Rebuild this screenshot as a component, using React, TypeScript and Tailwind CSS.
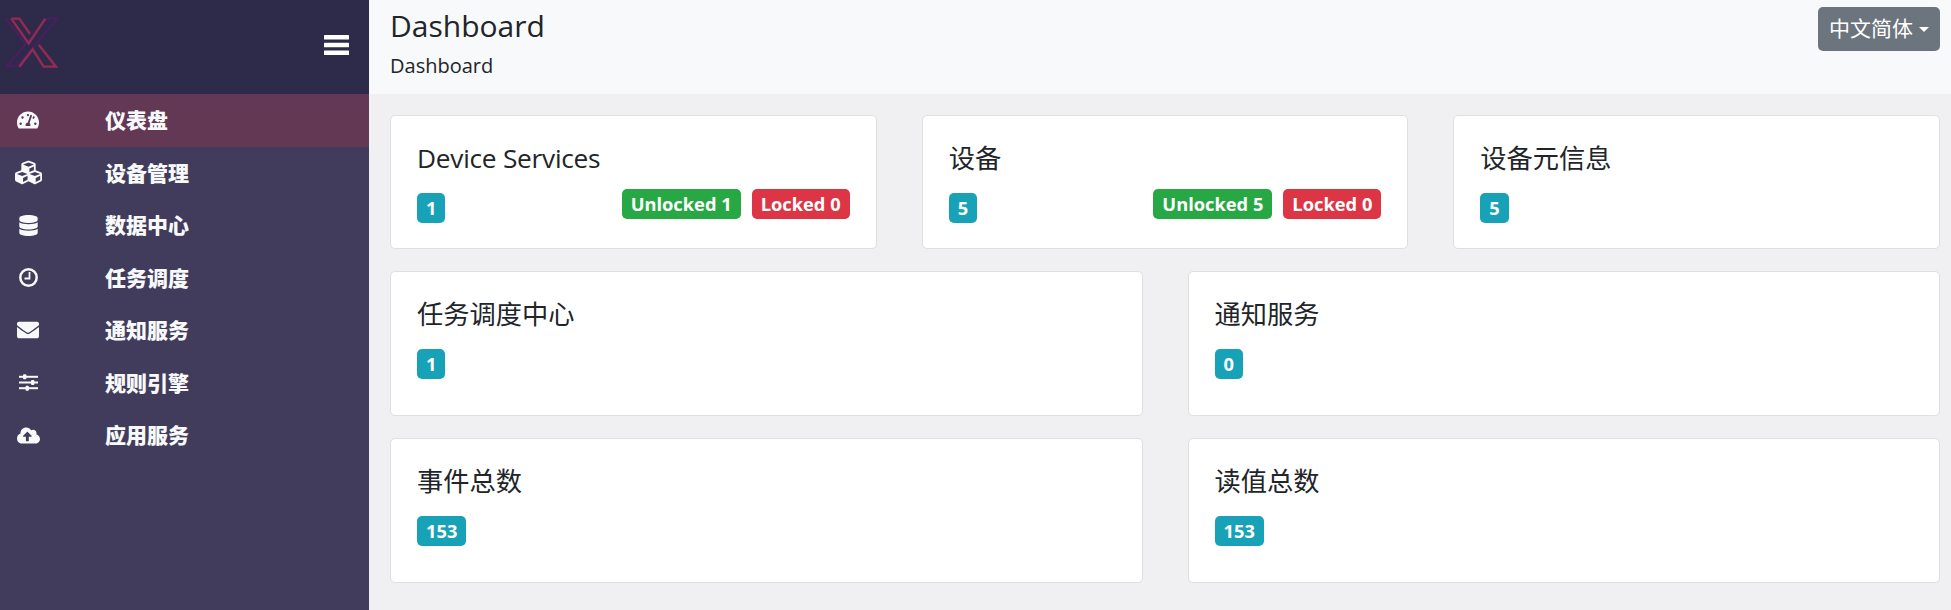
import { FaCloudUploadAlt, FaCubes, FaDatabase, FaEnvelope, FaTachometerAlt } from 'react-icons/fa';

const font = 'font-["Open_Sans","Noto_Sans_CJK_SC",sans-serif]';

function ClockIcon() {
  return (
    <svg width="19" height="19" viewBox="0 0 19 19" fill="none" stroke="currentColor">
      <circle cx="9.5" cy="9.5" r="8.2" strokeWidth="2.5" />
      <path d="M10.5 4V10.5H5.5" strokeWidth="1.8" />
    </svg>
  );
}

function SlidersIcon() {
  return (
    <svg width="19" height="17" viewBox="0 0 19 17" fill="currentColor">
      <rect y="1.8" width="19" height="2" />
      <rect y="7.5" width="19" height="2" />
      <rect y="13.2" width="19" height="2" />
      <rect x="4" y="0.3" width="3.4" height="5" rx="1" />
      <rect x="12" y="6" width="3.4" height="5" rx="1" />
      <rect x="6.5" y="11.7" width="3.4" height="5" rx="1" />
    </svg>
  );
}

const navItems = [
  { label: '仪表盘', icon: <FaTachometerAlt size={22} />, active: true },
  { label: '设备管理', icon: <FaCubes size={27} /> },
  { label: '数据中心', icon: <FaDatabase size={21} /> },
  { label: '任务调度', icon: <ClockIcon /> },
  { label: '通知服务', icon: <FaEnvelope size={22} /> },
  { label: '规则引擎', icon: <SlidersIcon /> },
  { label: '应用服务', icon: <FaCloudUploadAlt size={23} /> },
];

function Logo() {
  return (
    <svg width="60" height="58" viewBox="0 0 180 174" fill="none" strokeWidth="7">
      <path d="M12 14L70 90L14 158H44L166 14H135L14 158" stroke="#47205e" />
      <path d="M28 14H52L84 60M28 14L80 88L130 14M52 158L92 106L125 158H162L110 92" stroke="#952b55" />
    </svg>
  );
}

function MenuIcon() {
  return (
    <svg className="mt-[21px]" width="25" height="20" viewBox="0 0 25 20" fill="white">
      <rect width="25" height="4.5" rx="0.5" />
      <rect y="7.75" width="25" height="4.5" rx="0.5" />
      <rect y="15.5" width="25" height="4.5" rx="0.5" />
    </svg>
  );
}

function Badge({ color, children }: { color: string; children: React.ReactNode }) {
  return (
    <span className={`${color} inline-flex h-[30px] items-center rounded-[5px] px-[9px] text-[18.3px] font-bold text-white`}>
      {children}
    </span>
  );
}

function Card({ title, count, unlocked, locked, height, latin }: { title: string; count: number; unlocked?: number; locked?: number; height: string; latin?: boolean }) {
  return (
    <div className={`${height} rounded-[5px] border border-[#dfdfdf] bg-white px-[26px] pt-[27px]`}>
      <h5 className={`text-[26.25px] leading-[31.5px] text-[#212529] ${latin ? 'tracking-[-0.25px]' : ''}`}>{title}</h5>
      <div className="mt-[14.5px] flex items-start justify-between">
        <div className="pt-[4px]">
          <Badge color="bg-[#17a2b8]">{count}</Badge>
        </div>
        {unlocked !== undefined && (
          <div className="flex gap-[11px]">
            <Badge color="bg-[#28a745]">Unlocked {unlocked}</Badge>
            <Badge color="bg-[#dc3545]">Locked {locked}</Badge>
          </div>
        )}
      </div>
    </div>
  );
}

export default function App() {
  return (
    <div className={`${font} flex h-[610px] overflow-hidden bg-[#f0f0f3]`}>
      <aside className="w-[369px] shrink-0 bg-[#423c5c]">
        <div className="flex h-[94px] items-start justify-between bg-[#2e2a4a] pl-[2px] pr-[20px] pt-[14px]">
          <Logo />
          <MenuIcon />
        </div>
        <nav className="flex flex-col">
          {navItems.map((item) => (
            <a key={item.label} className={`flex h-[52.5px] items-center text-[21px] font-black text-[#f8f9fa] ${item.active ? 'bg-[#623855]' : ''}`}>
              <span className="flex w-[56px] justify-center">{item.icon}</span>
              <span className="ml-[49px] pt-[1px]">{item.label}</span>
            </a>
          ))}
        </nav>
      </aside>
      <main className="min-w-0 flex-1">
        <header className="flex h-[94px] items-start justify-between bg-[#f8f9fa] pl-[21px] pr-[11px] text-[#212529]">
          <div className="pt-[5px]">
            <h1 className="text-[30px] font-medium leading-[42px]">Dashboard</h1>
            <p className="mt-[5px] text-[20px] font-medium leading-[28px]">Dashboard</p>
          </div>
          <button className="mt-[7px] flex h-[44px] w-[122px] items-center justify-center gap-[6px] rounded-[5px] bg-[#6c757d] text-[21px] text-white">
            中文简体
            <span className="h-0 w-0 border-x-[5px] border-t-[5px] border-x-transparent border-t-white" />
          </button>
        </header>
        <div className="flex flex-col gap-[22px] pl-[21px] pr-[11px] pt-[21px]">
          <div className="grid grid-cols-3 gap-[45px]">
            <Card title="Device Services" count={1} unlocked={1} locked={0} height="h-[134px]" latin />
            <Card title="设备" count={5} unlocked={5} locked={0} height="h-[134px]" />
            <Card title="设备元信息" count={5} height="h-[134px]" />
          </div>
          <div className="grid grid-cols-2 gap-[45px]">
            <Card title="任务调度中心" count={1} height="h-[145px]" />
            <Card title="通知服务" count={0} height="h-[145px]" />
          </div>
          <div className="grid grid-cols-2 gap-[45px]">
            <Card title="事件总数" count={153} height="h-[145px]" />
            <Card title="读值总数" count={153} height="h-[145px]" />
          </div>
        </div>
      </main>
    </div>
  );
}
